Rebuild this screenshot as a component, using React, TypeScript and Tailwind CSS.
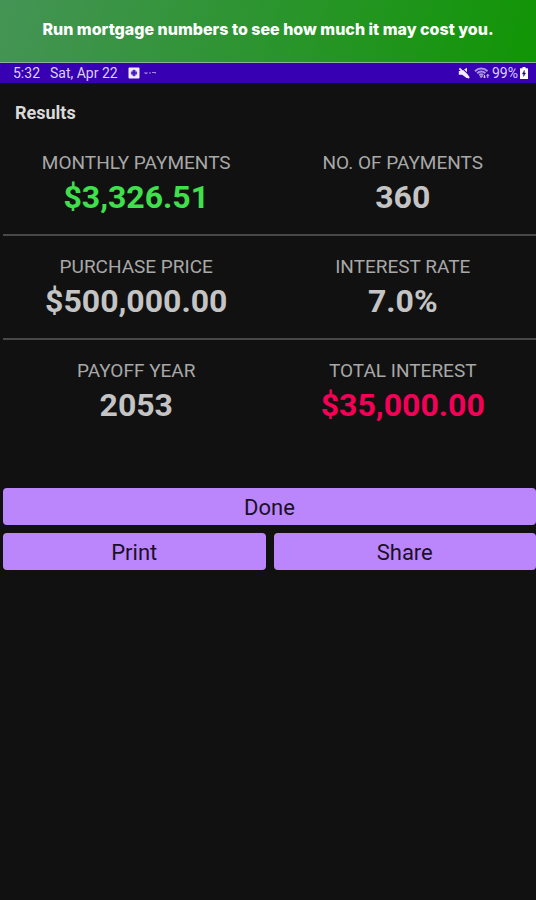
import clsx from 'clsx';

type Result = {
  label: string;
  value: string;
  color?: string;
};

const rows: Result[][] = [
  [
    { label: 'MONTHLY PAYMENTS', value: '$3,326.51', color: 'text-[#3fe04c]' },
    { label: 'NO. OF PAYMENTS', value: '360' },
  ],
  [
    { label: 'PURCHASE PRICE', value: '$500,000.00' },
    { label: 'INTEREST RATE', value: '7.0%' },
  ],
  [
    { label: 'PAYOFF YEAR', value: '2053' },
    { label: 'TOTAL INTEREST', value: '$35,000.00', color: 'text-[#f50057]' },
  ],
];

function StatusBar() {
  return (
    <div className="flex h-5 items-center justify-between bg-[#3700b3] pr-2 pl-[13px] text-sm leading-5 text-[#dcd2f5]">
      <div className="flex items-center">
        <span>5:32</span>
        <span className="ml-2.5">Sat, Apr 22</span>
        <svg className="ml-2.5 size-3" viewBox="0 0 12 12" aria-hidden="true">
          <rect x="0.5" y="0.5" width="11" height="11" rx="1" fill="#f1ebff" />
          <circle cx="6" cy="6" r="3" fill="#7a5fd0" />
          <path d="M6 2.8v6.4M2.8 6h6.4" stroke="#3700b3" strokeWidth="1.2" />
        </svg>
        <svg className="ml-1 h-3 w-3" viewBox="0 0 12 12" fill="none" stroke="#a58be0" aria-hidden="true">
          <path d="M0.5 5.5l1.5 1l1.5-1M5 6h2M8 5.5h3.5v1" strokeWidth="1.1" />
        </svg>
      </div>
      <div className="flex items-center">
        <svg className="mr-1 size-3" viewBox="0 0 12 12" fill="#f1ebff" aria-hidden="true">
          <path d="M0.8 4h3L9 0.8V6L11.5 10.5L8.5 11L4.2 7.8H0.8z" />
          <path d="M3.4 0.6L10.6 7.4" stroke="#3700b3" strokeWidth="1.1" />
          <path d="M1.4 1.4l9.6 9.6" stroke="#f1ebff" strokeWidth="1.9" />
        </svg>
        <svg className="mr-0.5 h-3.5 w-4" viewBox="0 0 16 14" fill="none" stroke="#a994e2" aria-hidden="true">
          <path d="M1 5.2C4.5 1.5 10 1.5 13.5 5.2M3.2 7.2C5.6 4.8 9 4.8 11.3 7.2M5.2 9.2C6.5 8 8 8 9.3 9.2" strokeWidth="2" />
          <path d="M6 10h2.4l-1.2 1.8z" fill="#a994e2" />
          <path d="M10.5 12V9M9.3 10.6l1.2 1.4l1.2-1.4M13.8 12V8.6M12.6 9.8l1.2-1.4l1.2 1.4" stroke="#d5c8f4" />
        </svg>
        <span>99%</span>
        <svg className="ml-0.5 h-3 w-2" viewBox="0 0 8 12" aria-hidden="true">
          <path d="M2.5 0h3v1.3H7.5a.5.5 0 0 1 .5.5V11.5a.5.5 0 0 1-.5.5H.5a.5.5 0 0 1-.5-.5V1.8a.5.5 0 0 1 .5-.5h2z" fill="#fff" />
          <path d="M4.4 3.4L2.4 7h1.4L3.5 9.4L5.6 6H4.2z" fill="#24007a" stroke="#24007a" strokeWidth="0.5" />
        </svg>
      </div>
    </div>
  );
}

function ResultCell({ label, value, color = 'text-[#c4c4c4]' }: Result) {
  return (
    <div className="flex flex-col items-center">
      <dt className="text-[19px] leading-6 text-[#a8a8a8]">{label}</dt>
      <dd className={clsx('mt-1 text-[32px] leading-9 font-bold', color)}>{value}</dd>
    </div>
  );
}

function ActionButton({ label, className }: { label: string; className?: string }) {
  return (
    <button
      type="button"
      className={clsx('h-[37px] cursor-pointer rounded-sm bg-[#bb86fc] pt-0.5 text-[22px] leading-7 text-[#1b1026]', className)}
    >
      {label}
    </button>
  );
}

export default function App() {
  return (
    <div className="flex min-h-screen flex-col bg-[#111111] font-[Roboto,sans-serif]">
      <header className="border-b border-[#8fae9c] bg-linear-[105deg,#459456,#119505] px-4 pt-[17px] pb-[21px] text-center font-[Inter,sans-serif] text-base leading-6 font-extrabold text-white">
        Run mortgage numbers to see how much it may cost you.
      </header>
      <StatusBar />
      <main className="flex-1 pl-[3px]">
        <h1 className="px-3 pt-4 pb-6 text-lg leading-7 font-bold text-[#dadada]">Results</h1>
        {rows.map((row) => (
          <dl
            key={row[0].label}
            className="mb-[19px] grid grid-cols-2 border-b-2 border-[#484848] pb-[19px] last-of-type:mb-0 last-of-type:border-transparent"
          >
            {row.map((item) => (
              <ResultCell key={item.label} {...item} />
            ))}
          </dl>
        ))}
        <div className="mt-11 grid grid-cols-2 gap-2">
          <ActionButton label="Done" className="col-span-2" />
          <ActionButton label="Print" />
          <ActionButton label="Share" />
        </div>
      </main>
    </div>
  );
}
